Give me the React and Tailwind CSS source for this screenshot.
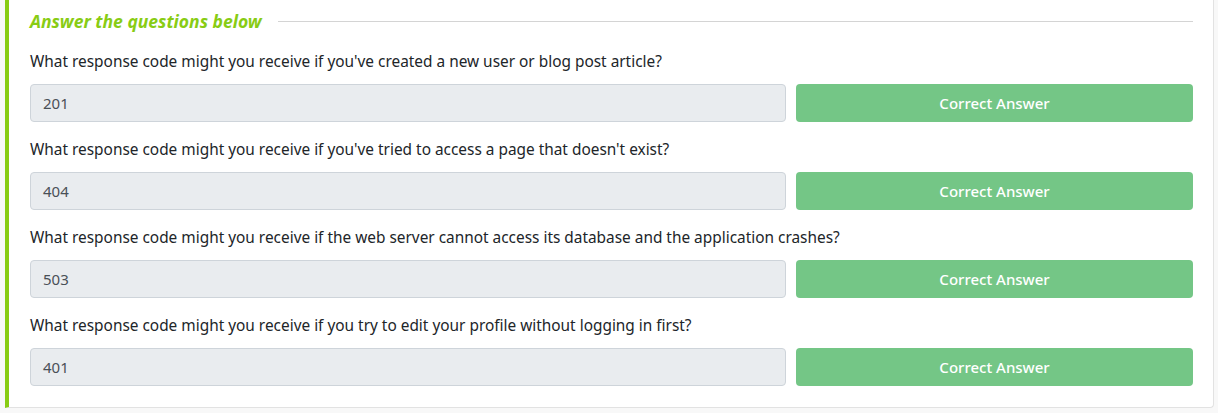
const QUESTIONS = [
  { q: "What response code might you receive if you've created a new user or blog post article?", a: '201' },
  { q: "What response code might you receive if you've tried to access a page that doesn't exist?", a: '404' },
  { q: 'What response code might you receive if the web server cannot access its database and the application crashes?', a: '503' },
  { q: 'What response code might you receive if you try to edit your profile without logging in first?', a: '401' },
];

function QuestionRow({ q, a }) {
  return (
    <div className="mt-[17px]">
      <p className="text-[15.4px] leading-[22px] text-[#212529]">{q}</p>
      <div className="mt-[11px] flex gap-[10px]">
        <div className="flex h-[38px] flex-1 items-center rounded-[4px] border border-[#ced4da] bg-[#e9ecef] px-3 text-[15px] text-[#495057]">
          {a}
        </div>
        <button className="h-[38px] w-[397px] rounded-[4px] bg-[#74c686] text-[15px] font-medium text-white">
          Correct Answer
        </button>
      </div>
    </div>
  );
}

export default function App() {
  return (
    <div className="h-[413px] bg-[#f8f8f8] pl-[5px] pr-[4px]" style={{ fontFamily: '"Noto Sans", "Open Sans", sans-serif' }}>
      <div className="h-[408px] rounded-br-[4px] border-b border-r border-[#e2e2e2] border-l-4 border-l-[#88cc14] bg-white pl-[21px] pr-[20px]">
        <div className="flex items-center gap-4 pt-[8px]">
          <h3 className="text-[17.5px] font-bold italic leading-[26px] text-[#88cc14]">Answer the questions below</h3>
          <div className="h-px flex-1 bg-[#d4d4d4]" />
        </div>
        <div className="mt-[9px]">
          {QUESTIONS.map((item) => (
            <QuestionRow key={item.a} q={item.q} a={item.a} />
          ))}
        </div>
      </div>
    </div>
  );
}
